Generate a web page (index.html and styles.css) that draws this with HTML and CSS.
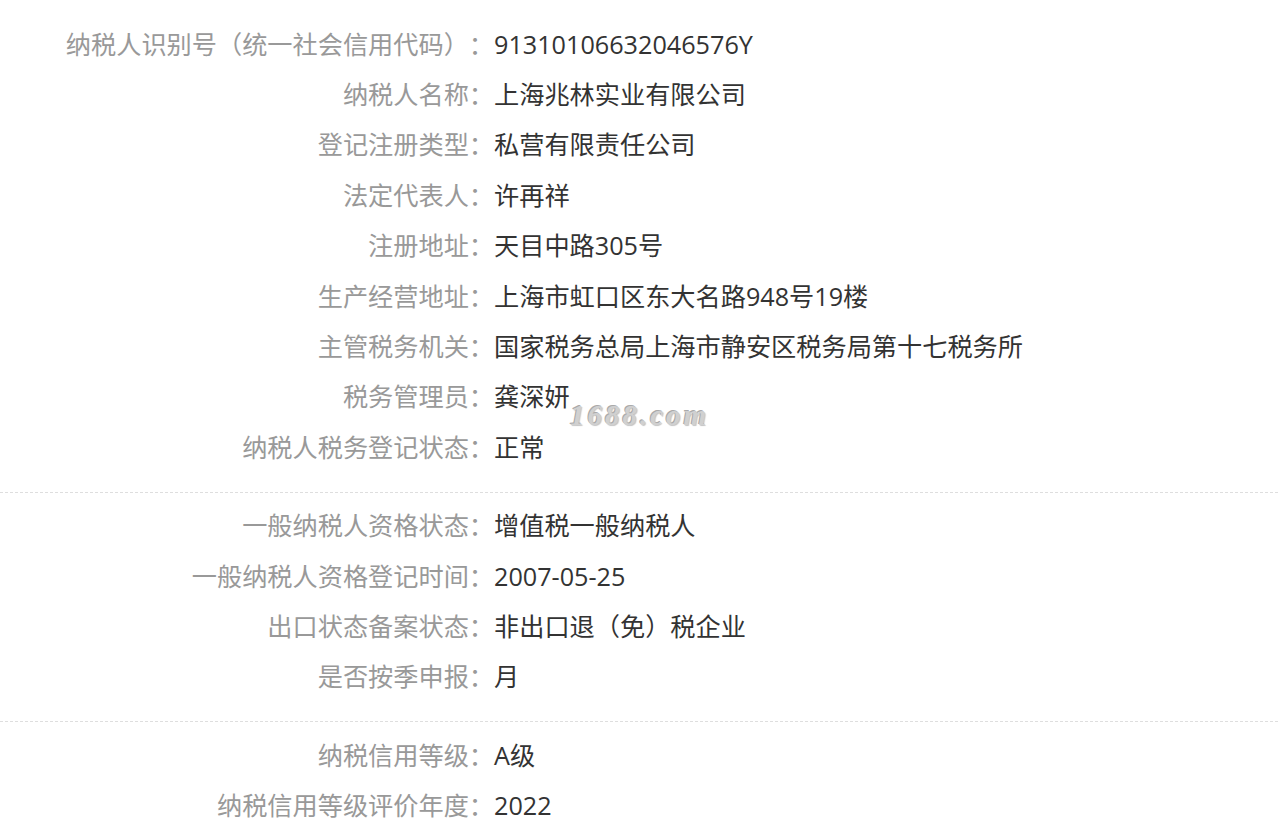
FILE: index.html
```html
<!DOCTYPE html>
<html lang="zh-CN">
<head>
    <meta charset="UTF-8">
    <meta name="viewport" content="width=device-width, initial-scale=1.0">
    <title>纳税信息</title>
    <link rel="stylesheet" href="styles.css">
</head>
<body>

    <div class="tax-info">
        <div class="info-group first">
            <div class="info-row"><span class="label">纳税人识别号（统一社会信用代码）：</span><span class="value">91310106632046576Y</span></div>
            <div class="info-row"><span class="label">纳税人名称：</span><span class="value">上海兆林实业有限公司</span></div>
            <div class="info-row"><span class="label">登记注册类型：</span><span class="value">私营有限责任公司</span></div>
            <div class="info-row"><span class="label">法定代表人：</span><span class="value">许再祥</span></div>
            <div class="info-row"><span class="label">注册地址：</span><span class="value">天目中路305号</span></div>
            <div class="info-row"><span class="label">生产经营地址：</span><span class="value">上海市虹口区东大名路948号19楼</span></div>
            <div class="info-row"><span class="label">主管税务机关：</span><span class="value">国家税务总局上海市静安区税务局第十七税务所</span></div>
            <div class="info-row"><span class="label">税务管理员：</span><span class="value">龚深妍<span class="watermark">1688.com</span></span></div>
            <div class="info-row"><span class="label">纳税人税务登记状态：</span><span class="value">正常</span></div>
        </div>

        <div class="info-group">
            <div class="info-row"><span class="label">一般纳税人资格状态：</span><span class="value">增值税一般纳税人</span></div>
            <div class="info-row"><span class="label">一般纳税人资格登记时间：</span><span class="value">2007-05-25</span></div>
            <div class="info-row"><span class="label">出口状态备案状态：</span><span class="value">非出口退（免）税企业</span></div>
            <div class="info-row"><span class="label">是否按季申报：</span><span class="value">月</span></div>
        </div>

        <div class="info-group last">
            <div class="info-row"><span class="label">纳税信用等级：</span><span class="value">A级</span></div>
            <div class="info-row"><span class="label">纳税信用等级评价年度：</span><span class="value">2022</span></div>
        </div>
    </div>

</body>
</html>
```

FILE: styles.css
```css
body {
    margin: 0;
    padding: 0;
    background-color: #fff;
    font-family: "Open Sans", "Noto Sans CJK SC", sans-serif;
    font-size: 25.2px;
    line-height: 50.4px;
    text-spacing-trim: space-all;
}

.tax-info {
    width: 100%;
}

.info-group {
    padding: 7.5px 0 19.5px;
    border-bottom: 1px dashed #dedede;
}

.info-group.first {
    padding-top: 18.5px;
}

.info-group.last {
    border-bottom: none;
}

.info-row {
    display: grid;
    grid-template-columns: 494px 1fr;
}

.label {
    text-align: right;
    color: #999;
    white-space: nowrap;
}

.value {
    position: relative;
    color: #333;
    white-space: nowrap;
}

.watermark {
    position: absolute;
    left: 76px;
    top: 29px;
    font-family: "Liberation Serif", serif;
    font-style: italic;
    font-weight: bold;
    font-size: 29px;
    line-height: 30px;
    letter-spacing: 3px;
    color: #d0d0d0;
    text-shadow: -1px -1px 0 #aaa, 1px 1px 1px #c4c4c4;
}
```
